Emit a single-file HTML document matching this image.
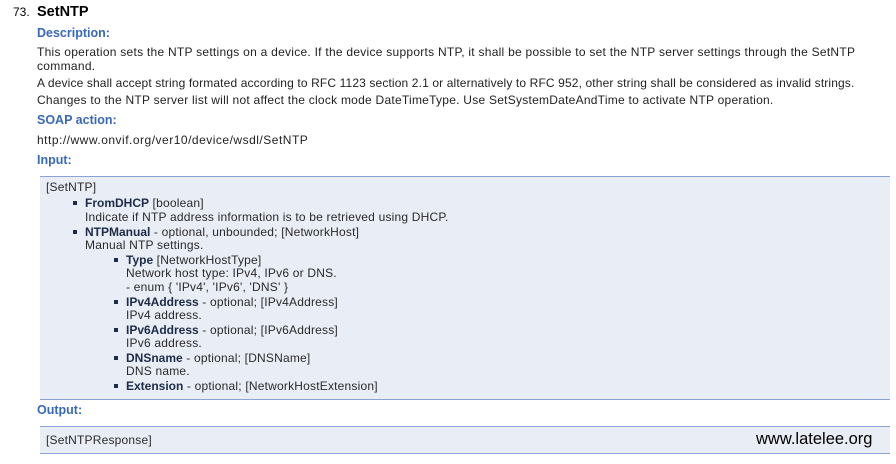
<!DOCTYPE html>
<html><head><meta charset="utf-8"><style>
body{margin:0;width:896px;height:464px;background:#fff;position:relative;overflow:hidden;font-family:Tahoma,"Liberation Sans",sans-serif;}
.l{position:absolute;white-space:nowrap;font-size:12px;line-height:14px;color:#222;}
.h{color:#3a68b8;font-weight:bold;font-size:12.5px;}
.b{font-size:12px;color:#2a2a2a;letter-spacing:0.2px;}
.b b{color:#1c2c48;letter-spacing:0;}
.box{position:absolute;left:40px;right:6px;background:#e9edf5;border-top:1px solid #8aa3d4;border-bottom:1px solid #8aa3d4;}
.sq{position:absolute;width:4px;height:4px;background:#1c2c48;}
</style></head><body>
<div class="l" style="left:13px;top:5px;font-size:12px;color:#000">73.</div>
<div class="l" style="left:37px;top:3px;font-size:14.5px;font-weight:bold;color:#000;line-height:18px">SetNTP</div>
<div class="l h" style="left:37px;top:26px">Description:</div>
<div class="l" style="left:37px;top:45px;letter-spacing:0.26px">This operation sets the NTP settings on a device. If the device supports NTP, it shall be possible to set the NTP server settings through the SetNTP</div>
<div class="l" style="left:37px;top:59px;letter-spacing:0.3px">command.</div>
<div class="l" style="left:37px;top:76px;letter-spacing:0.13px">A device shall accept string formated according to RFC 1123 section 2.1 or alternatively to RFC 952, other string shall be considered as invalid strings.</div>
<div class="l" style="left:37px;top:93px;letter-spacing:0.25px">Changes to the NTP server list will not affect the clock mode DateTimeType. Use SetSystemDateAndTime to activate NTP operation.</div>
<div class="l h" style="left:37px;top:113px">SOAP action:</div>
<div class="l" style="left:37px;top:133px;letter-spacing:0.5px">http://www.onvif.org/ver10/device/wsdl/SetNTP</div>
<div class="l h" style="left:37px;top:153px">Input:</div>
<div class="box" style="top:176px;height:222px"></div>
<div class="l b" style="left:46px;top:180px">[SetNTP]</div>
<div class="sq" style="left:73px;top:201px"></div>
<div class="l b" style="left:85px;top:196px"><b>FromDHCP</b> [boolean]</div>
<div class="l b" style="left:85px;top:210px">Indicate if NTP address information is to be retrieved using DHCP.</div>
<div class="sq" style="left:73px;top:230px"></div>
<div class="l b" style="left:85px;top:225px"><b>NTPManual</b> - optional, unbounded; [NetworkHost]</div>
<div class="l b" style="left:85px;top:238px">Manual NTP settings.</div>
<div class="sq" style="left:114px;top:258px"></div>
<div class="l b" style="left:126px;top:253px"><b>Type</b> [NetworkHostType]</div>
<div class="l b" style="left:126px;top:266px">Network host type: IPv4, IPv6 or DNS.</div>
<div class="l b" style="left:126px;top:280px">- enum { 'IPv4', 'IPv6', 'DNS' }</div>
<div class="sq" style="left:114px;top:300px"></div>
<div class="l b" style="left:126px;top:295px"><b>IPv4Address</b> - optional; [IPv4Address]</div>
<div class="l b" style="left:126px;top:308px">IPv4 address.</div>
<div class="sq" style="left:114px;top:328px"></div>
<div class="l b" style="left:126px;top:323px"><b>IPv6Address</b> - optional; [IPv6Address]</div>
<div class="l b" style="left:126px;top:336px">IPv6 address.</div>
<div class="sq" style="left:114px;top:356px"></div>
<div class="l b" style="left:126px;top:351px"><b>DNSname</b> - optional; [DNSName]</div>
<div class="l b" style="left:126px;top:364px">DNS name.</div>
<div class="sq" style="left:114px;top:384px"></div>
<div class="l b" style="left:126px;top:379px"><b>Extension</b> - optional; [NetworkHostExtension]</div>
<div class="l h" style="left:37px;top:403px">Output:</div>
<div class="box" style="top:426px;height:26px"></div>
<div class="l b" style="left:46px;top:433px">[SetNTPResponse]</div>
<div class="l" style="left:756px;top:430px;font-size:16.5px;line-height:19px;color:#000">www.latelee.org</div>
</body></html>
